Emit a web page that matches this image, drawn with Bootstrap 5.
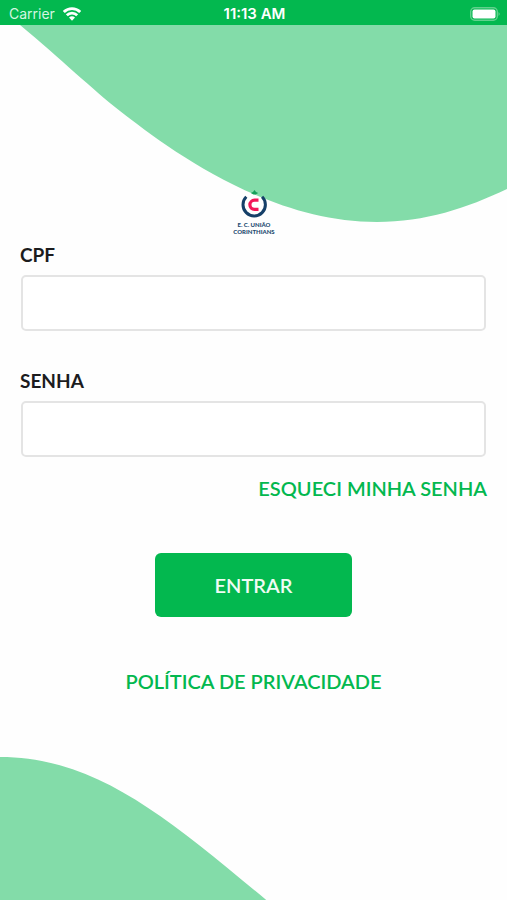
<!DOCTYPE html>
<html lang="pt-BR">
<head>
<meta charset="utf-8">
<meta name="viewport" content="width=device-width, initial-scale=1">
<title>E. C. União Corinthians</title>
<link href="https://cdn.jsdelivr.net/npm/bootstrap@5.3.0/dist/css/bootstrap.min.css" rel="stylesheet">
<style>
  :root { --brand: #03b84f; --brand-soft: #83dca9; }
  body { font-family: Lato, sans-serif; color: #1c1c1e; background: #fefefe; }
  .status-bar { background: var(--brand); color: #fff; font: 14px/25px Inter, sans-serif; padding: 1px 7px 0 9px; height: 25px; }
  .carrier { color: #d5f5e1; }
  .clock { font-size: 15px; font-weight: 600; }
  .wave { fill: var(--brand-soft); pointer-events: none; }
  .wave-top { width: 100%; top: 25px; }
  .wave-bottom { width: 53%; }
  .login { padding: 165px 20px 0; }
  .club-logo { width: 48px; height: 48px; }
  .field-label { font-size: 19px; line-height: 24px; font-weight: 700; margin: 5px 0 8px; }
  .field-box { height: 56px; border: 2px solid #e4e4e4; border-radius: 5px; font-size: 19px; }
  .field-wrap { padding: 0 1px; margin-bottom: 38px; }
  .field-wrap-last { margin-bottom: 18px; }
  .text-link { color: var(--brand); font-size: 20px; line-height: 26px; font-weight: 600; }
  .btn-enter { --bs-btn-color: #effcf4; --bs-btn-bg: var(--brand); --bs-btn-hover-color: #fff; --bs-btn-hover-bg: #029e43;
    --bs-btn-active-color: #fff; --bs-btn-active-bg: #029e43; --bs-btn-border-radius: 6px;
    width: 42%; height: 64px; font-size: 20px; font-weight: 600; margin: 51px 0; }
</style>
</head>
<body>
<div class="position-relative min-vh-100 overflow-hidden">
  <svg class="wave wave-top position-absolute start-0" viewBox="0 25 507 198" aria-hidden="true">
    <path d="M20 25C62 60 92 89 120 111C165 146 265 222 377 222C425 222 467 208 507 189V25Z"/>
  </svg>
  <svg class="wave wave-bottom position-absolute start-0 bottom-0" viewBox="0 756 268 144" aria-hidden="true">
    <path d="M0 757C95 757 165 816 266 900H0Z"/>
  </svg>

  <header class="status-bar position-relative row g-0 align-items-center">
    <div class="col d-flex align-items-center gap-2 carrier">
      <span>Carrier</span>
      <svg width="18" height="14" viewBox="0 0 18 14" fill="none" stroke="#fff" stroke-width="2.8" aria-label="Wi-Fi" role="img">
        <path d="M.8 5C5.300 .4 12.700 .4 17.200 5"/>
        <path d="M3.800 8.300C6.700 5.400 11.300 5.400 14.200 8.300"/>
        <path d="M6 10.600Q9 7.900 12 10.600L9 13.700Z" fill="#fff" stroke="none"/>
      </svg>
    </div>
    <div class="col-auto clock">11:13 AM</div>
    <div class="col d-flex justify-content-end">
      <svg width="30" height="14" viewBox="0 0 30 14" aria-label="Bateria" role="img">
        <rect x=".7" y=".7" width="26.600" height="12.600" rx="4" fill="none" stroke="#62d08d" stroke-width="1.400"/>
        <rect x="2.500" y="2.500" width="23" height="9" rx="2" fill="#fff"/>
        <path d="M28.500 5Q31 7 28.500 9Z" fill="#62d08d"/>
      </svg>
    </div>
  </header>

  <main class="login position-relative">
    <svg class="club-logo d-block mx-auto" viewBox="0 0 48 48" role="img" aria-label="E. C. União Corinthians">
      <path d="M24.500 0L26 2L28.200 3L25.600 4.500H23.400L20.800 3L23 2Z" fill="#16a05a"/>
      <path d="M16.300 6.800A11.200 11.200 0 1 0 32.100 6.800" fill="none" stroke="#153f68" stroke-width="3"/>
      <path d="M28.500 10.200H24.500A4.600 4.600 0 0 0 24.500 19.400H28.500" fill="none" stroke="#f21758" stroke-width="3.200"/>
      <g font-family="Lato, sans-serif" font-size="6" font-weight="900" fill="#234a70" text-anchor="middle">
        <text x="24" y="37">E. C. UNIÃO</text>
        <text x="24" y="44">CORINTHIANS</text>
      </g>
    </svg>
    <form>
      <label class="field-label d-block" for="cpf">CPF</label>
      <div class="field-wrap"><input class="form-control field-box" id="cpf" type="text" inputmode="numeric"></div>
      <label class="field-label d-block" for="senha">SENHA</label>
      <div class="field-wrap field-wrap-last"><input class="form-control field-box" id="senha" type="password"></div>
      <div class="text-end"><a class="text-link text-decoration-none" href="#">ESQUECI MINHA SENHA</a></div>
      <div class="text-center"><button class="btn btn-enter border-0" type="submit">ENTRAR</button></div>
    </form>
    <div class="text-center"><a class="text-link text-decoration-none" href="#">POLÍTICA DE PRIVACIDADE</a></div>
  </main>
</div>
<script src="https://cdn.jsdelivr.net/npm/bootstrap@5.3.0/dist/js/bootstrap.bundle.min.js"></script>
</body>
</html>
